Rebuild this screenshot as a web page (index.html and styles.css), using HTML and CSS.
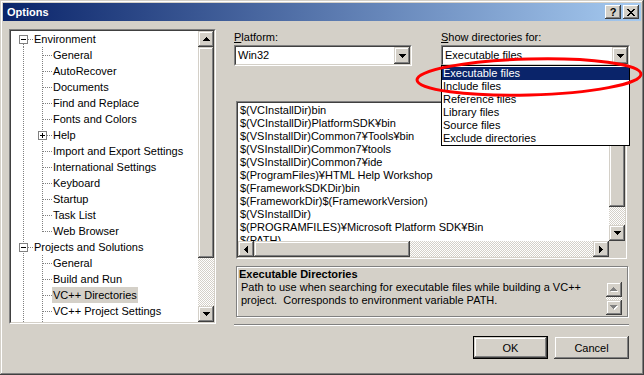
FILE: index.html
```html
<!DOCTYPE html>
<html lang="en">
<head>
    <meta charset="UTF-8">
    <title>Options</title>
    <link rel="stylesheet" href="styles.css">
</head>
<body>
<div class="window">
    <div class="titlebar">
        <span class="title">Options</span>
        <span class="cap-btn">?</span>
        <span class="cap-btn"><svg width="8" height="7" viewBox="0 0 8 7"><path d="M0 0h2v1h-2z M6 0h2v1h-2z M1 1h2v1h-2z M5 1h2v1h-2z M2 2h4v1h-4z M3 3h2v1h-2z M2 4h4v1h-4z M1 5h2v1h-2z M5 5h2v1h-2z M0 6h2v1h-2z M6 6h2v1h-2z"/></svg></span>
    </div>

    <div class="client">
        <div class="tree">
            <div class="tree-inner">
                <div class="nodes">
                    <div class="node"><span class="exp first"><span class="box"></span></span><span class="label">Environment</span></div>
                    <div class="node"><span class="rail"></span><span class="branch"></span><span class="label">General</span></div>
                    <div class="node"><span class="rail"></span><span class="branch"></span><span class="label">AutoRecover</span></div>
                    <div class="node"><span class="rail"></span><span class="branch"></span><span class="label">Documents</span></div>
                    <div class="node"><span class="rail"></span><span class="branch"></span><span class="label">Find and Replace</span></div>
                    <div class="node"><span class="rail"></span><span class="branch"></span><span class="label">Fonts and Colors</span></div>
                    <div class="node"><span class="rail"></span><span class="branch plus"><span class="box closed"></span></span><span class="label">Help</span></div>
                    <div class="node"><span class="rail"></span><span class="branch"></span><span class="label">Import and Export Settings</span></div>
                    <div class="node"><span class="rail"></span><span class="branch"></span><span class="label">International Settings</span></div>
                    <div class="node"><span class="rail"></span><span class="branch"></span><span class="label">Keyboard</span></div>
                    <div class="node"><span class="rail"></span><span class="branch"></span><span class="label">Startup</span></div>
                    <div class="node"><span class="rail"></span><span class="branch"></span><span class="label">Task List</span></div>
                    <div class="node"><span class="rail"></span><span class="branch last"></span><span class="label">Web Browser</span></div>
                    <div class="node"><span class="exp"><span class="box"></span></span><span class="label">Projects and Solutions</span></div>
                    <div class="node"><span class="rail"></span><span class="branch"></span><span class="label">General</span></div>
                    <div class="node"><span class="rail"></span><span class="branch"></span><span class="label">Build and Run</span></div>
                    <div class="node"><span class="rail"></span><span class="branch"></span><span class="label selected">VC++ Directories</span></div>
                    <div class="node"><span class="rail"></span><span class="branch"></span><span class="label">VC++ Project Settings</span></div>
                    <div class="node"><span class="rail"></span><span class="branch"></span><span class="label">VC++ Build</span></div>
                </div>
                <div class="vscroll">
                    <span class="sb-btn"><svg width="7" height="4" viewBox="0 0 7 4"><path d="M3 0h1v1h-1z M2 1h3v1h-3z M1 2h5v1h-5z M0 3h7v1h-7z"/></svg></span>
                    <span class="thumb tree-thumb"></span>
                    <span class="track"></span>
                    <span class="sb-btn"><svg width="7" height="4" viewBox="0 0 7 4"><path d="M0 0h7v1h-7z M1 1h5v1h-5z M2 2h3v1h-3z M3 3h1v1h-1z"/></svg></span>
                </div>
            </div>
        </div>

        <div class="page">
            <div class="pickers">
                <div class="field">
                    <label><u>P</u>latform:</label>
                    <div class="combo"><div class="combo-inner">
                        <span class="combo-text">Win32</span>
                        <span class="drop-btn"><svg width="7" height="4" viewBox="0 0 7 4"><path d="M0 0h7v1h-7z M1 1h5v1h-5z M2 2h3v1h-3z M3 3h1v1h-1z"/></svg></span>
                    </div></div>
                </div>
                <div class="field">
                    <label><u>S</u>how directories for:</label>
                    <div class="combo"><div class="combo-inner">
                        <span class="combo-text">Executable files</span>
                        <span class="drop-btn"><svg width="7" height="4" viewBox="0 0 7 4"><path d="M0 0h7v1h-7z M1 1h5v1h-5z M2 2h3v1h-3z M3 3h1v1h-1z"/></svg></span>
                    </div></div>
                </div>
            </div>

            <div class="dirlist">
                <div class="dirlist-inner">
                    <div class="paths">
                        <div>$(VCInstallDir)bin</div>
                        <div>$(VCInstallDir)PlatformSDK¥bin</div>
                        <div>$(VSInstallDir)Common7¥Tools¥bin</div>
                        <div>$(VSInstallDir)Common7¥tools</div>
                        <div>$(VSInstallDir)Common7¥ide</div>
                        <div>$(ProgramFiles)¥HTML Help Workshop</div>
                        <div>$(FrameworkSDKDir)bin</div>
                        <div>$(FrameworkDir)$(FrameworkVersion)</div>
                        <div>$(VSInstallDir)</div>
                        <div>$(PROGRAMFILES)¥Microsoft Platform SDK¥Bin</div>
                        <div>$(PATH)</div>
                    </div>
                    <div class="vscroll">
                        <span class="sb-btn"><svg width="7" height="4" viewBox="0 0 7 4"><path d="M3 0h1v1h-1z M2 1h3v1h-3z M1 2h5v1h-5z M0 3h7v1h-7z"/></svg></span>
                        <span class="thumb list-thumb"></span>
                        <span class="track"></span>
                        <span class="sb-btn"><svg width="7" height="4" viewBox="0 0 7 4"><path d="M0 0h7v1h-7z M1 1h5v1h-5z M2 2h3v1h-3z M3 3h1v1h-1z"/></svg></span>
                    </div>
                    <div class="hscroll">
                        <span class="sb-btn"><svg width="4" height="7" viewBox="0 0 4 7"><path d="M3 0h1v7h-1z M2 1h1v5h-1z M1 2h1v3h-1z M0 3h1v1h-1z"/></svg></span>
                        <span class="thumb h-thumb"></span>
                        <span class="track"></span>
                        <span class="sb-btn"><svg width="4" height="7" viewBox="0 0 4 7"><path d="M0 0h1v7h-1z M1 1h1v5h-1z M2 2h1v3h-1z M3 3h1v1h-1z"/></svg></span>
                    </div>
                    <div class="corner"></div>
                </div>
            </div>

            <div class="desc">
                <div class="desc-title">Executable Directories</div>
                <div class="desc-text">Path to use when searching for executable files while building a VC++<br>project.&nbsp; Corresponds to environment variable PATH.</div>
                <div class="desc-scroll">
                    <span class="sb-btn small"><svg width="8" height="5" viewBox="0 0 8 5"><path fill="#fff" d="M4 1h1v1h-1z M3 2h3v1h-3z M2 3h5v1h-5z M1 4h7v1h-7z"/><path fill="#808080" d="M3 0h1v1h-1z M2 1h3v1h-3z M1 2h5v1h-5z M0 3h7v1h-7z"/></svg></span>
                    <span class="track"></span>
                    <span class="sb-btn small"><svg width="8" height="5" viewBox="0 0 8 5"><path fill="#fff" d="M1 1h7v1h-7z M2 2h5v1h-5z M3 3h3v1h-3z M4 4h1v1h-1z"/><path fill="#808080" d="M0 0h7v1h-7z M1 1h5v1h-5z M2 2h3v1h-3z M3 3h1v1h-1z"/></svg></span>
                </div>
            </div>

            <div class="separator"></div>

            <div class="actions">
                <button class="btn default">OK</button>
                <button class="btn">Cancel</button>
            </div>
        </div>
    </div>

    <div class="dropdown">
        <div class="option active">Executable files</div>
        <div class="option">Include files</div>
        <div class="option">Reference files</div>
        <div class="option">Library files</div>
        <div class="option">Source files</div>
        <div class="option">Exclude directories</div>
    </div>

    <svg class="mark" width="230" height="42" viewBox="0 0 230 42"><ellipse cx="115" cy="21" rx="112" ry="18" transform="rotate(-1.5 115 21)" fill="none" stroke="#ff0000" stroke-width="3"/></svg>
</div>
</body>
</html>
```

FILE: styles.css
```css
body { margin: 0; background: #d4d0c8; font-family: "Liberation Sans", Arial, sans-serif; font-size: 11px; color: #000; }

.window { position: relative; width: 644px; height: 375px; box-sizing: border-box; padding: 3px; background: #d4d0c8; overflow: hidden;
    box-shadow: inset -1px -1px #404040, inset 1px 1px #d4d0c8, inset -2px -2px #808080, inset 2px 2px #fff; }

.titlebar { display: flex; align-items: center; height: 18px; padding: 0 2px; background: linear-gradient(to right, #0a246a, #a6caf0); }
.title { flex: 1; padding-left: 2px; color: #fff; font-weight: bold; }
.cap-btn { display: flex; align-items: center; justify-content: center; width: 16px; height: 14px; box-sizing: border-box; background: #d4d0c8; font-weight: bold; font-size: 11px;
    box-shadow: inset -1px -1px #404040, inset 1px 1px #fff, inset -2px -2px #808080; }
.cap-btn + .cap-btn { margin-left: 2px; }

.client { display: flex; gap: 18px; padding: 8px 0 0 6px; }

/* sunken fields: outer + inner border */
.tree, .dirlist, .combo { box-sizing: border-box; border: 1px solid; border-color: #808080 #fff #fff #808080; }
.tree-inner, .dirlist-inner, .combo-inner { box-sizing: border-box; height: 100%; border: 1px solid; border-color: #404040 #d4d0c8 #d4d0c8 #404040; background: #fff; }

/* tree */
.tree { width: 207px; height: 295px; }
.tree-inner { display: flex; }
.nodes { flex: 1; overflow: hidden; }
.node { display: flex; height: 16px; --vdots: repeating-linear-gradient(#808080 0 1px, transparent 1px 2px); --hdots: repeating-linear-gradient(to right, #808080 0 1px, transparent 1px 2px); }
.label { padding: 0 1px; line-height: 16px; white-space: nowrap; }
.label.selected { background: #d4d0c8; }
.exp { flex: none; width: 22px; background: var(--hdots) 17px 8px / 5px 1px no-repeat, var(--vdots) 12px 0 / 1px 16px no-repeat; }
.exp.first { background: var(--hdots) 17px 8px / 5px 1px no-repeat, var(--vdots) 12px 13px / 1px 3px no-repeat; }
.rail { flex: none; width: 22px; background: var(--vdots) 12px 0 / 1px 16px no-repeat; }
.branch { flex: none; width: 19px; background: var(--hdots) 10px 8px / 9px 1px no-repeat, var(--vdots) 9px 0 / 1px 16px no-repeat; }
.branch.last { background: var(--hdots) 10px 8px / 9px 1px no-repeat, var(--vdots) 9px 0 / 1px 9px no-repeat; }
.branch.plus { background: var(--hdots) 14px 8px / 5px 1px no-repeat, var(--vdots) 9px 0 / 1px 16px no-repeat; }
.box { display: block; width: 9px; height: 9px; box-sizing: border-box; margin: 4px 0 0 8px; border: 1px solid #808080;
    background: linear-gradient(#000, #000) center / 5px 1px no-repeat, #fff; }
.branch .box { margin-left: 5px; }
.box.closed { background: linear-gradient(#000, #000) center / 5px 1px no-repeat, linear-gradient(#000, #000) center / 1px 5px no-repeat, #fff; }

/* scrollbars */
.vscroll { display: flex; flex-direction: column; width: 16px; background: #d4d0c8; }
.hscroll { display: flex; height: 16px; background: #d4d0c8; }
.sb-btn, .thumb, .drop-btn, .btn { box-sizing: border-box; background: #d4d0c8;
    box-shadow: inset -1px -1px #404040, inset 1px 1px #d4d0c8, inset -2px -2px #808080, inset 2px 2px #fff; }
.sb-btn { display: flex; align-items: center; justify-content: center; flex: none; width: 16px; height: 16px; }
.track { flex: 1; background: repeating-conic-gradient(#fff 0 25%, #d4d0c8 0 50%) 0 0 / 2px 2px; }
.tree-thumb { flex: none; height: 211px; }
.list-thumb { flex: none; height: 88px; }
.h-thumb { flex: none; width: 156px; }
.corner { background: #d4d0c8; }

/* right page */
.page { display: flex; flex-direction: column; width: 396px; }
.pickers { display: grid; grid-template-columns: 178px 189px; column-gap: 29px; padding-top: 2px; }
.field label { display: block; line-height: 13px; margin-bottom: 1px; }
.combo { height: 21px; }
.combo-inner { display: flex; align-items: stretch; }
.combo-text { flex: 1; padding-left: 2px; line-height: 17px; white-space: nowrap; overflow: hidden; }
.drop-btn { display: flex; align-items: center; justify-content: center; width: 16px; }

.dirlist { width: 391px; height: 158px; margin: 35px 0 0 2px; }
.dirlist-inner { display: grid; grid-template-columns: 1fr 16px; grid-template-rows: 1fr 16px; }
.paths { padding: 1px 0 0 2px; line-height: 13px; white-space: nowrap; overflow: hidden; }

.desc { display: grid; grid-template-columns: 1fr 16px; grid-template-rows: 13px auto; width: 392px; height: 51px; box-sizing: border-box; margin: 7px 0 0 2px; padding: 1px 5px 0 2px;
    border: 1px solid #808080; box-shadow: 1px 1px #fff, inset 1px 1px #fff; }
.desc-title { grid-column: 1 / -1; font-weight: bold; line-height: 13px; }
.desc-text { padding-left: 2px; line-height: 13px; white-space: nowrap; }
.desc-scroll { display: flex; flex-direction: column; height: 33px; margin-top: 1px; }
.sb-btn.small { height: 15px; }

.separator { margin: 7px 1px 0 0; border-top: 1px solid #808080; border-bottom: 1px solid #fff; }

.actions { display: flex; justify-content: flex-end; gap: 6px; margin-top: 10px; padding-right: 1px; }
.btn { width: 75px; height: 23px; padding: 0; border: none; font-family: "Liberation Sans", Arial, sans-serif; font-size: 11px; color: #000; }
.btn.default { border: 1px solid #000; }

/* overlays: open dropdown list and the red annotation */
.dropdown { position: absolute; left: 441px; top: 65px; width: 189px; height: 81px; box-sizing: border-box; padding-top: 1px; border: 1px solid #000; background: #fff; }
.option { padding-left: 1px; line-height: 13px; white-space: nowrap; }
.option.active { background: #0a246a; color: #fff; }
.mark { position: absolute; left: 414px; top: 56px; pointer-events: none; }
```
